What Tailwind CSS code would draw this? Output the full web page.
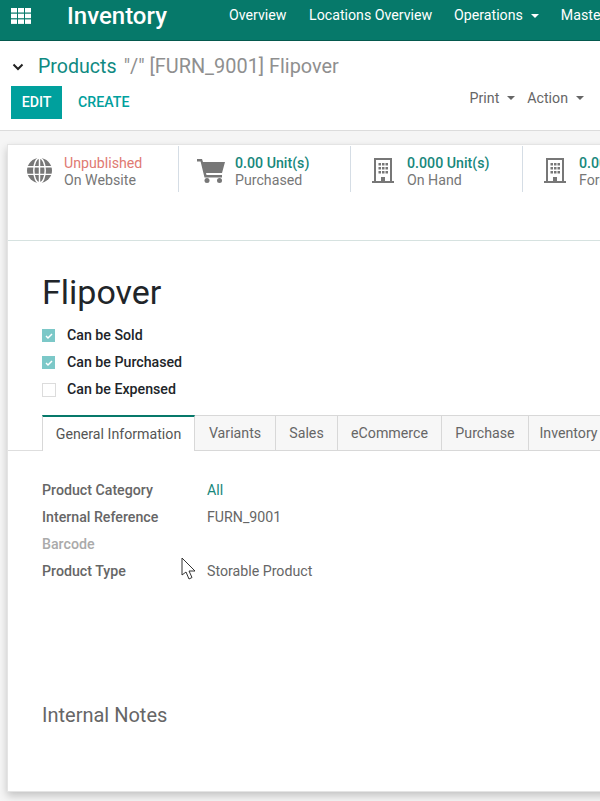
<!DOCTYPE html>
<html lang="en">
<head>
  <meta charset="UTF-8" />
  <title>Inventory</title>
  <script src="https://cdn.jsdelivr.net/npm/@tailwindcss/browser@4"></script>
</head>
<body class="w-[600px] h-[801px] overflow-hidden bg-[#f5f5f5] font-['Roboto',sans-serif] text-[14.2px] relative">

  <!-- Top nav -->
  <nav class="h-[41px] pb-[9px] bg-[#06796a] border-b border-[#05594e] flex items-center text-white whitespace-nowrap overflow-hidden">
    <svg class="ml-[11px] w-[20px] h-[16px] shrink-0" viewBox="0 0 20 16" fill="#fff">
      <rect x="0" y="0" width="6" height="4.500"/><rect x="7" y="0" width="6" height="4.500"/><rect x="14" y="0" width="6" height="4.500"/>
      <rect x="0" y="5.700" width="6" height="4.500"/><rect x="7" y="5.700" width="6" height="4.500"/><rect x="14" y="5.700" width="6" height="4.500"/>
      <rect x="0" y="11.400" width="6" height="4.500"/><rect x="7" y="11.400" width="6" height="4.500"/><rect x="14" y="11.400" width="6" height="4.500"/>
    </svg>
    <span class="ml-[36px] text-[24px] font-medium w-[162px] shrink-0">Inventory</span>
    <span class="w-[80px] shrink-0">Overview</span>
    <span class="w-[145px] shrink-0">Locations Overview</span>
    <span class="shrink-0">Operations</span>
    <span class="ml-[8px] w-0 h-0 border-x-[4px] border-x-transparent border-t-[4px] border-t-white shrink-0"></span>
    <span class="ml-[22px] shrink-0">Master Data</span>
  </nav>

  <!-- Control panel -->
  <div class="h-[90px] bg-white border-b border-[#dcdcdc] relative">
    <div class="flex items-center h-[52px] pl-[12px]">
      <svg class="w-[12px] h-[8px] shrink-0" viewBox="0 0 12 8" fill="none" stroke="#222" stroke-width="2"><path d="M1.500 1.500 6 6l4.500-4.500"/></svg>
      <span class="ml-[14px] text-[19.6px] text-[#0f8a82]">Products</span>
      <span class="ml-[7px] text-[19.9px] text-[#8f8f8f]">"/" [FURN_9001] Flipover</span>
    </div>
    <div class="flex items-center justify-between pl-[11px] pr-[16px] -mt-[7px]">
      <div class="flex items-center">
        <button class="h-[33px] w-[51px] bg-[#00a09d] text-white font-medium">EDIT</button>
        <button class="ml-[16px] text-[#00a09d] font-medium">CREATE</button>
      </div>
      <div class="flex items-center text-[#666] -mt-[8px]">
        <span>Print</span>
        <span class="ml-[8px] w-0 h-0 border-x-[4px] border-x-transparent border-t-[4px] border-t-[#666]"></span>
        <span class="ml-[12px]">Action</span>
        <span class="ml-[8px] w-0 h-0 border-x-[4px] border-x-transparent border-t-[4px] border-t-[#666]"></span>
      </div>
    </div>
  </div>

  <!-- Form sheet -->
  <div class="absolute left-[7px] top-[144px] w-[620px] h-[648px] bg-white border border-[#e4e4e4] shadow-[0_4px_8px_rgba(0,0,0,0.2)]">
    <div class="h-[96px] border-b border-[#d6e2e0] flex items-start pt-[1px] whitespace-nowrap">
      <div class="w-[171px] h-[46px] border-r border-[#d5dde5] flex items-center shrink-0">
        <svg class="ml-[19px] mt-[2px] w-[25px] h-[25px]" viewBox="0 0 24 24" fill="#777"><circle cx="12" cy="12" r="12"/><g stroke="#fff" stroke-width="1.400" fill="none"><path d="M0 8.300h24M0 15.700h24M12 0v24"/><ellipse cx="12" cy="12" rx="5.500" ry="12"/></g></svg>
        <div class="ml-[12px] pt-[6px] leading-[17px]">
          <div class="text-[#e07a72]">Unpublished</div>
          <div class="text-[#777]">On Website</div>
        </div>
      </div>
      <div class="w-[172px] h-[46px] border-r border-[#d5dde5] flex items-center shrink-0">
        <svg class="ml-[18px] mt-[2px] w-[28px] h-[25px]" viewBox="0 0 28 25" fill="#777"><path d="M0 1h5l1 3h22l-3 11H9l.5 2H25v2.500H7.500L3.600 3.500H0z"/><circle cx="10" cy="22.500" r="2.500"/><circle cx="22.500" cy="22.500" r="2.500"/></svg>
        <div class="ml-[10px] pt-[6px] leading-[17px]">
          <div class="text-[#17877b] font-medium">0.00 Unit(s)</div>
          <div class="text-[#777]">Purchased</div>
        </div>
      </div>
      <div class="w-[172px] h-[46px] border-r border-[#d5dde5] flex items-center shrink-0">
        <svg class="ml-[21px] mt-[2px] w-[22px] h-[25px]" viewBox="0 0 22 25" fill="#777"><path fill-rule="evenodd" d="M2 0h18v23h2v2H0v-2h2zM4 2v21h5v-4h4v4h5V2z"/><rect x="6.500" y="5" width="2.500" height="2.500"/><rect x="10" y="5" width="2.500" height="2.500"/><rect x="13.500" y="5" width="2.500" height="2.500"/><rect x="6.500" y="9" width="2.500" height="2.500"/><rect x="10" y="9" width="2.500" height="2.500"/><rect x="13.500" y="9" width="2.500" height="2.500"/><rect x="6.500" y="13" width="2.500" height="2.500"/><rect x="10" y="13" width="2.500" height="2.500"/><rect x="13.500" y="13" width="2.500" height="2.500"/></svg>
        <div class="ml-[13px] pt-[6px] leading-[17px]">
          <div class="text-[#17877b] font-medium">0.000 Unit(s)</div>
          <div class="text-[#777]">On Hand</div>
        </div>
      </div>
      <div class="h-[46px] flex items-center shrink-0">
        <svg class="ml-[21px] mt-[2px] w-[22px] h-[25px]" viewBox="0 0 22 25" fill="#777"><path fill-rule="evenodd" d="M2 0h18v23h2v2H0v-2h2zM4 2v21h5v-4h4v4h5V2z"/><rect x="6.500" y="5" width="2.500" height="2.500"/><rect x="10" y="5" width="2.500" height="2.500"/><rect x="13.500" y="5" width="2.500" height="2.500"/><rect x="6.500" y="9" width="2.500" height="2.500"/><rect x="10" y="9" width="2.500" height="2.500"/><rect x="13.500" y="9" width="2.500" height="2.500"/><rect x="6.500" y="13" width="2.500" height="2.500"/><rect x="10" y="13" width="2.500" height="2.500"/><rect x="13.500" y="13" width="2.500" height="2.500"/></svg>
        <div class="ml-[13px] pt-[6px] leading-[17px]">
          <div class="text-[#17877b] font-medium">0.00 Unit(s)</div>
          <div class="text-[#777]">Forecasted</div>
        </div>
      </div>
    </div>

    <div class="pl-[34px] pt-[30px]">
      <h1 class="text-[34px] leading-[42px] text-[#212529]">Flipover</h1>
      <div class="mt-[13px] flex flex-col gap-[8px] font-medium text-[#212529]">
        <div class="flex items-center h-[19px]">
          <span class="w-[13px] h-[13px] bg-[#7cc8c8] flex items-center justify-center"><svg class="w-[8px] h-[8px]" viewBox="0 0 8 8" fill="none" stroke="#fff" stroke-width="1.500"><path d="M1 4l2 2 4-4"/></svg></span>
          <span class="ml-[12px]">Can be Sold</span>
        </div>
        <div class="flex items-center h-[19px]">
          <span class="w-[13px] h-[13px] bg-[#7cc8c8] flex items-center justify-center"><svg class="w-[8px] h-[8px]" viewBox="0 0 8 8" fill="none" stroke="#fff" stroke-width="1.500"><path d="M1 4l2 2 4-4"/></svg></span>
          <span class="ml-[12px]">Can be Purchased</span>
        </div>
        <div class="flex items-center h-[19px]">
          <span class="w-[14px] h-[14px] bg-white border border-[#dcdcdc]"></span>
          <span class="ml-[11px]">Can be Expensed</span>
        </div>
      </div>
    </div>

    <!-- Tabs -->
    <div class="mt-[16px] h-[36px] border-b border-[#dedede] flex pl-[34px] whitespace-nowrap text-[#666]">
      <div class="w-[153px] h-[36px] pt-[2px] bg-white border-t-2 border-t-[#06796a] border-x border-x-[#d8d8d8] flex items-center justify-center text-[#555] shrink-0">General Information</div>
      <div class="w-[81px] h-[36px] pt-[1px] bg-[#f7f7f7] border-y border-r border-[#d8d8d8] flex items-center justify-center shrink-0">Variants</div>
      <div class="w-[62px] h-[36px] pt-[1px] bg-[#f7f7f7] border-y border-r border-[#d8d8d8] flex items-center justify-center shrink-0">Sales</div>
      <div class="w-[104px] h-[36px] pt-[1px] bg-[#f7f7f7] border-y border-r border-[#d8d8d8] flex items-center justify-center shrink-0">eCommerce</div>
      <div class="w-[87px] h-[36px] pt-[1px] bg-[#f7f7f7] border-y border-r border-[#d8d8d8] flex items-center justify-center shrink-0">Purchase</div>
      <div class="w-[80px] h-[36px] pt-[1px] bg-[#f7f7f7] border-y border-r border-[#d8d8d8] flex items-center justify-center shrink-0">Inventory</div>
    </div>

    <!-- Fields -->
    <div class="pl-[34px] pt-[26px] grid grid-cols-[165px_1fr] auto-rows-[27px] items-center">
      <div class="font-medium text-[#666]">Product Category</div><div class="text-[#17877b]">All</div>
      <div class="font-medium text-[#666]">Internal Reference</div><div class="text-[#666]">FURN_9001</div>
      <div class="font-medium text-[#aaa]">Barcode</div><div></div>
      <div class="font-medium text-[#666]">Product Type</div><div class="text-[#666]">Storable Product</div>
    </div>

    <h2 class="pl-[34px] mt-[118px] text-[20px] leading-[24px] text-[#666]">Internal Notes</h2>
  </div>

  <!-- Mouse cursor -->
  <svg class="absolute left-[181px] top-[557px] w-[16px] h-[24px]" viewBox="0 0 16 24" fill="#fff" stroke="#333" stroke-width="1"><path d="M1 1v17l4-3 3 7 3-1.500-3-6.500h6z"/></svg>
</body>
</html>
